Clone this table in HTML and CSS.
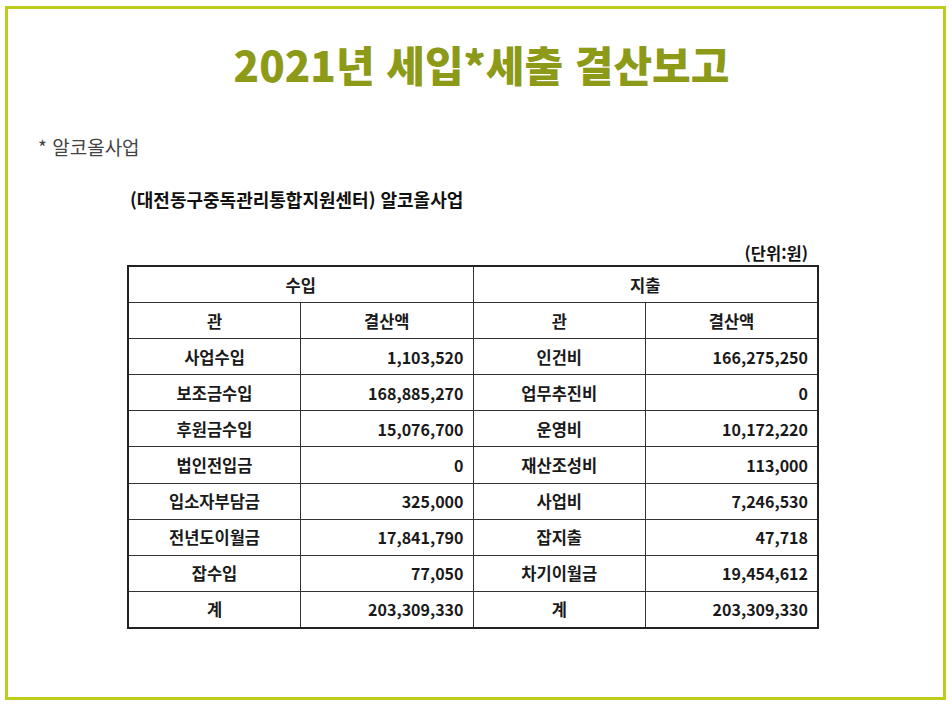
FILE: index.html
```html
<!DOCTYPE html>
<html lang="ko">
<head>
<meta charset="utf-8">
<title>2021년 세입*세출 결산보고</title>
<link rel="stylesheet" href="styles.css">
</head>
<body>
<div class="frame">
  <h1 class="title">2021년 세입*세출 결산보고</h1>
  <p class="note">* 알코올사업</p>
  <p class="sub">(대전동구중독관리통합지원센터) 알코올사업</p>
  <div class="report">
    <div class="unit">(단위:원)</div>
    <table class="budget">
      <colgroup>
        <col class="c"><col class="c"><col class="c"><col class="c">
      </colgroup>
      <tr><th colspan="2">수입</th><th colspan="2">지출</th></tr>
      <tr><th>관</th><th>결산액</th><th>관</th><th>결산액</th></tr>
      <tr><td>사업수입</td><td class="num">1,103,520</td><td>인건비</td><td class="num">166,275,250</td></tr>
      <tr><td>보조금수입</td><td class="num">168,885,270</td><td>업무추진비</td><td class="num">0</td></tr>
      <tr><td>후원금수입</td><td class="num">15,076,700</td><td>운영비</td><td class="num">10,172,220</td></tr>
      <tr><td>법인전입금</td><td class="num">0</td><td>재산조성비</td><td class="num">113,000</td></tr>
      <tr><td>입소자부담금</td><td class="num">325,000</td><td>사업비</td><td class="num">7,246,530</td></tr>
      <tr><td>전년도이월금</td><td class="num">17,841,790</td><td>잡지출</td><td class="num">47,718</td></tr>
      <tr><td>잡수입</td><td class="num">77,050</td><td>차기이월금</td><td class="num">19,454,612</td></tr>
      <tr><td>계</td><td class="num">203,309,330</td><td>계</td><td class="num">203,309,330</td></tr>
    </table>
  </div>
</div>
</body>
</html>
```
FILE: styles.css
```css
html, body {
  margin: 0;
  padding: 0;
  background: #ffffff;
}
body {
  font-family: "Noto Sans CJK KR", "Noto Sans", sans-serif;
  color: #111;
}
.frame {
  margin: 6px 0 0 5px;
  width: 941px;
  height: 694px;
  box-sizing: border-box;
  border: 3px solid #bdcb1b;
  display: flex;
  flex-direction: column;
}
.title {
  margin: 30px 0 0 0;
  padding-left: 12px;
  height: 50px;
  line-height: 50px;
  text-align: center;
  font-size: 42px;
  font-weight: 900;
  color: #8c9a18;
  letter-spacing: 0;
}
.note {
  margin: 46px 0 0 0;
  padding-left: 30px;
  height: 24px;
  line-height: 24px;
  font-size: 19px;
  color: #444;
}
.sub {
  margin: 28px 0 0 0;
  padding-left: 122px;
  height: 24px;
  line-height: 24px;
  font-size: 18px;
  font-weight: 700;
  color: #111;
}
.report {
  margin: 32px 0 0 119px;
  width: 692px;
}
.unit {
  height: 20px;
  line-height: 20px;
  text-align: right;
  padding-right: 11px;
  font-size: 16.5px;
  font-weight: 700;
  margin-bottom: 2px;
}
.budget {
  width: 692px;
  border-collapse: collapse;
  table-layout: fixed;
  border: 2px solid #222;
}
.budget .c {
  width: 25%;
}
.budget th, .budget td {
  border: 1px solid #333;
  height: 35.1px;
  padding: 0 9px;
  font-size: 16.5px;
  font-weight: 700;
  text-align: center;
  line-height: 20px;
  color: #1a1a1a;
}
.budget td.num {
  font-size: 16px;
  text-align: right;
}
```
